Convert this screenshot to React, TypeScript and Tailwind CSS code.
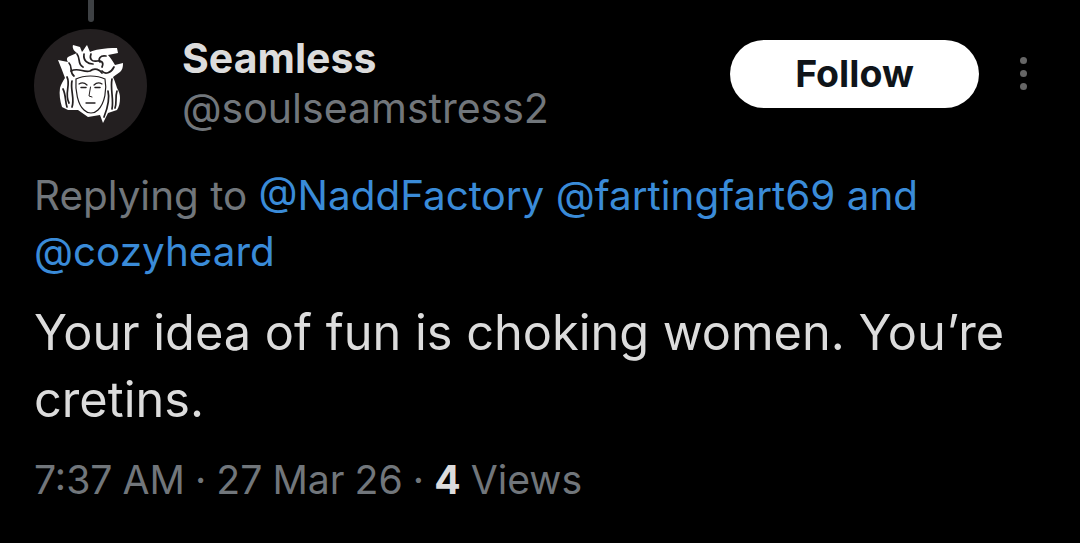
import React from 'react'

const MedusaLogo = () => (
  <svg viewBox="0 0 113 113" className="w-[113px] h-[113px]">
    <circle cx="56.5" cy="56.5" r="56.5" fill="#231f20" />
    {/* hair silhouette */}
    <path
      d="M24 31 L34 33 C32 30 33 28 36 27 L43 24 C40 22 38 19 39 16 L46 18 L48 23 C50 21 51 18 53 16 L56 23 C60 21 70 19 83 19 L84 24 L74 26 C77 29 79 33 81 36 L89 34 C89 39 88 41 86 43 L79 48 C81 52 82 56 83 59 C85 62 86 66 86 69 C86 74 85 78 83 81 L74 84 L69 94 L66 86 L54 88 L44 81 L34 81 L28 78 C26 72 25 65 26 59 C27 55 29 52 31 49 L28 41 Z"
      fill="#fff"
    />
    {/* gaps between the snakes */}
    <g fill="none" stroke="#231f20" strokeWidth="1.7" strokeLinecap="round">
      <path d="M35 34 C39 38 35 43 40 47" />
      <path d="M43 25 C47 30 43 35 49 38" />
      <path d="M50 25 C49 32 54 35 59 35" />
      <path d="M57 25 C55 30 58 33 63 32 C68 31 70 34 68 38" />
      <path d="M72 27 C66 26 64 30 66 33" />
      <path d="M80 38 C77 44 71 46 68 42" />
      <path d="M37 42 C44 38 50 44 56 42 C61 38 66 41 68 44" />
      <path d="M33 48 C37 56 30 64 35 74" />
      <path d="M29 60 C32 66 31 72 33 78" />
      <path d="M38 52 C36 60 41 70 38 78" />
      <path d="M78 50 C76 60 80 70 78 80" />
      <path d="M83 62 C81 68 83 74 81 79" />
      <path d="M74 62 C76 70 74 78 70 88" />
    </g>
    {/* face */}
    <path
      d="M42 50 C50 46 63 46 71 50 C73 60 71 74 64 81 C60 85 54 85 50 81 C44 76 41 62 42 50 Z"
      fill="#fff"
      stroke="#231f20"
      strokeWidth="1.2"
    />
    <g fill="none" stroke="#231f20" strokeLinecap="round">
      <path d="M45 55 C48 53 51 54 53 56" strokeWidth="1.2" />
      <path d="M60 56 C62 54 65 53 68 55" strokeWidth="1.2" />
      <path d="M47 58.5 L52 58.5" strokeWidth="1.5" />
      <path d="M61 58.5 L66 58.5" strokeWidth="1.5" />
      <path d="M56.5 58 L55 67 L58 68" strokeWidth="1" />
      <path d="M52 74 L61 74" strokeWidth="1.3" />
    </g>
  </svg>
)

const Link = ({ children }: { children: React.ReactNode }) => (
  <span className="text-[#3a8bd8]">{children}</span>
)

export default function App() {
  return (
    <div className="w-[1080px] h-[543px] bg-black overflow-hidden pl-[34px] font-['Inter',sans-serif]">
      {/* thread line */}
      <div className="w-[113px] flex justify-center">
        <div className="w-[6px] h-[22px] bg-[#3e4144] rounded-b-full" />
      </div>

      {/* header */}
      <div className="flex items-start mt-[7px] h-[113px]">
        <MedusaLogo />
        <div className="ml-[35px] w-[548px] pt-[4px] flex flex-col">
          <span className="text-[41px] leading-[50px] font-bold text-[#dcdcdc]">Seamless</span>
          <span className="text-[41px] leading-[50px] text-[#71767b]">@soulseamstress2</span>
        </div>
        <button className="mt-[11px] w-[249px] h-[68px] rounded-full bg-white text-[#0f1419] text-[37.5px] font-bold flex items-center justify-center">
          Follow
        </button>
        <div className="ml-[41px] mt-[28px] flex flex-col gap-[6px]">
          <span className="w-[7px] h-[7px] rounded-full bg-[#666]" />
          <span className="w-[7px] h-[7px] rounded-full bg-[#666]" />
          <span className="w-[7px] h-[7px] rounded-full bg-[#666]" />
        </div>
      </div>

      {/* replying to */}
      <p className="mt-[26px] text-[40.4px] leading-[56px] text-[#71767b]">
        Replying to <Link>@NaddFactory</Link> <Link>@fartingfart69</Link> <Link>and</Link>
        <br />
        <Link>@cozyheard</Link>
      </p>

      {/* body */}
      <p className="mt-[19px] text-[48.7px] leading-[67px] text-[#dcdcdc]">
        Your idea of fun is choking women. You’re
        <br />
        cretins.
      </p>

      {/* meta */}
      <p className="mt-[22px] text-[39.2px] leading-[50px] [word-spacing:-1px] text-[#71767b]">
        7:37 AM · 27 Mar 26 · <span className="font-bold text-[#dcdcdc]">4</span> Views
      </p>
    </div>
  )
}
